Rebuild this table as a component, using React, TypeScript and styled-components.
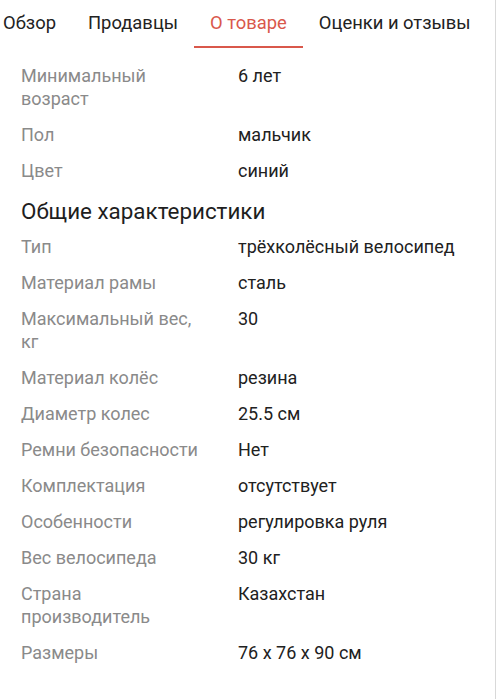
import React from "react";
import styled, { createGlobalStyle } from "styled-components";

const Global = createGlobalStyle`
  html, body { margin: 0; padding: 0; background: #fff; }
  body { font-family: Roboto, "Noto Sans", "Liberation Sans", sans-serif; -webkit-font-smoothing: antialiased; }
`;

const Page = styled.div`
  width: 495px;
  min-height: 699px;
  border-right: 1px solid #d9d9d9;
  overflow: hidden;
`;

const Tabs = styled.nav`
  display: flex;
  margin-left: -13px;
  height: 49px;
  white-space: nowrap;
`;

const Tab = styled.div<{ $active?: boolean }>`
  padding: 0 16px;
  font-size: 18.4px;
  line-height: 45px;
  color: ${(p) => (p.$active ? "#d9584b" : "#222")};
  border-bottom: 2px solid ${(p) => (p.$active ? "#d9584b" : "transparent")};
  height: 46px;
  box-sizing: content-box;
`;

const Content = styled.div`
  padding: 8px 0 0 21px;
`;

const Row = styled.div`
  display: grid;
  grid-template-columns: 197px 1fr;
  column-gap: 20px;
  padding: 6.5px 0;
  font-size: 18px;
  line-height: 23px;
`;

const Label = styled.div`
  color: #8a8a8a;
  white-space: pre-line;
`;

const Value = styled.div`
  color: #212121;
`;

const Heading = styled.h2`
  margin: 0;
  padding: 9px 0 3px;
  font-size: 22.4px;
  line-height: 28px;
  font-weight: 400;
  color: #1e1e1e;
`;

const tabs = ["Обзор", "Продавцы", "О товаре", "Оценки и отзывы"];

const first: [string, string][] = [
  ["Минимальный\nвозраст", "6 лет"],
  ["Пол", "мальчик"],
  ["Цвет", "синий"],
];

const general: [string, string][] = [
  ["Тип", "трёхколёсный велосипед"],
  ["Материал рамы", "сталь"],
  ["Максимальный вес,\nкг", "30"],
  ["Материал колёс", "резина"],
  ["Диаметр колес", "25.5 см"],
  ["Ремни безопасности", "Нет"],
  ["Комплектация", "отсутствует"],
  ["Особенности", "регулировка руля"],
  ["Вес велосипеда", "30 кг"],
  ["Страна\nпроизводитель", "Казахстан"],
  ["Размеры", "76 x 76 x 90 см"],
];

export default function App() {
  return (
    <Page>
      <Global />
      <Tabs>
        {tabs.map((t) => (
          <Tab key={t} $active={t === "О товаре"}>
            {t}
          </Tab>
        ))}
      </Tabs>
      <Content>
        {first.map(([l, v]) => (
          <Row key={l}>
            <Label>{l}</Label>
            <Value>{v}</Value>
          </Row>
        ))}
        <Heading>Общие характеристики</Heading>
        {general.map(([l, v]) => (
          <Row key={l}>
            <Label>{l}</Label>
            <Value>{v}</Value>
          </Row>
        ))}
      </Content>
    </Page>
  );
}
